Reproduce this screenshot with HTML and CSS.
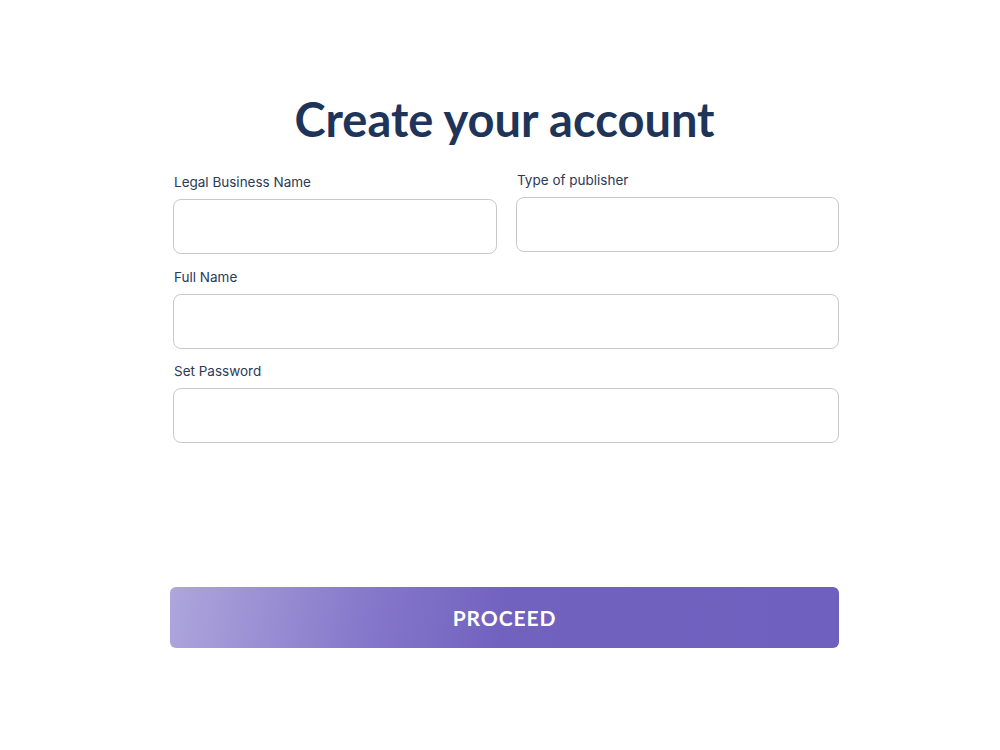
FILE: index.html
```html
<!DOCTYPE html>
<html lang="en">
<head>
  <meta charset="UTF-8" />
  <meta name="viewport" content="width=device-width, initial-scale=1.0"/>
  <title>Create your account</title>
  <link rel="stylesheet" href="styles.css">
</head>
<body>

  <main class="signup">
    <h1 class="title">Create your account</h1>

    <form class="form">
      <div class="row">
        <div class="field field-low">
          <label for="business">Legal Business Name</label>
          <input type="text" id="business" />
        </div>
        <div class="field">
          <label for="publisher">Type of publisher</label>
          <input type="text" id="publisher" />
        </div>
      </div>

      <div class="field field-next">
        <label for="fullname">Full Name</label>
        <input type="text" id="fullname" />
      </div>

      <div class="field">
        <label for="password">Set Password</label>
        <input type="password" id="password" />
      </div>

      <button type="button" class="proceed">PROCEED</button>
    </form>
  </main>

</body>
</html>
```

FILE: styles.css
```css
* {
  margin: 0;
  padding: 0;
  box-sizing: border-box;
}

body {
  font-family: Inter, "Noto Sans", sans-serif;
  background-color: #fff;
}

.signup {
  width: 669px;
  margin-left: 170px;
  padding-top: 91px;
}

.title {
  font-family: Lato, sans-serif;
  font-size: 47px;
  font-weight: 700;
  line-height: 56px;
  color: #1e3459;
  text-align: center;
}

.form {
  display: flex;
  flex-direction: column;
  gap: 14px;
  margin-top: 25px;
  padding-left: 3px;
}

.row {
  display: grid;
  grid-template-columns: 324px 323px;
  gap: 19px;
  align-items: start;
}

.field {
  display: flex;
  flex-direction: column;
  gap: 8px;
}

.field-low {
  padding-top: 2px;
}

.field-next {
  margin-top: 1px;
}

.field label {
  font-size: 13.5px;
  line-height: 17px;
  color: #2b3a58;
  padding-left: 1px;
}

.field input {
  height: 55px;
  border: 1px solid #c9c9cc;
  border-radius: 8px;
  padding: 0 14px;
  font-family: inherit;
  font-size: 15px;
  outline: none;
}

.proceed {
  margin-top: 130px;
  margin-left: -3px;
  height: 61px;
  border: none;
  border-radius: 6px;
  background: linear-gradient(100deg, #aea6dc 0%, #8577ca 30%, #7262c0 50%, #6f5fbe 100%);
  color: #fff;
  font-family: Lato, sans-serif;
  font-size: 21px;
  font-weight: 700;
  letter-spacing: 0.9px;
  cursor: pointer;
}
```
